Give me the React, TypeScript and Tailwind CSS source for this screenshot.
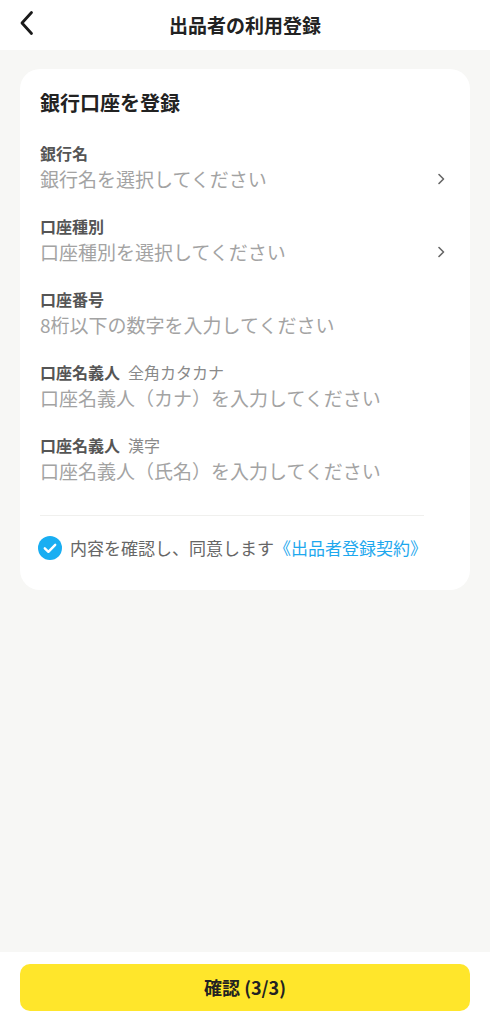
import React from "react";

const font = {
  fontFamily: '"Noto Sans CJK JP", "Noto Sans", sans-serif',
};

interface FieldRowProps {
  label: string;
  sub?: string;
  placeholder: string;
  select?: boolean;
}

function FieldRow({ label, sub, placeholder, select }: FieldRowProps) {
  return (
    <div className="flex items-center justify-between">
      <div className="flex flex-col">
        <div className="flex h-[24px] items-center gap-[8px]">
          <span className="text-[16px] font-bold leading-[24px] text-[#555555]">
            {label}
          </span>
          {sub && (
            <span className="text-[16px] leading-[24px] text-[#8a8a8a]">
              {sub}
            </span>
          )}
        </div>
        <span className="text-[19px] leading-[27px] text-[#a3a3a3]">
          {placeholder}
        </span>
      </div>
      {select && (
        <svg
          width="10"
          height="14"
          viewBox="0 0 10 14"
          className="mt-[24px] mr-[4px]"
        >
          <path
            d="M3 2.5 L7.5 7 L3 11.5"
            fill="none"
            stroke="#666"
            strokeWidth="1.6"
            strokeLinecap="round"
            strokeLinejoin="round"
          />
        </svg>
      )}
    </div>
  );
}

export default function App() {
  return (
    <div className="flex h-screen flex-col bg-[#f7f7f5]" style={font}>
      {/* header */}
      <header className="relative flex h-[50px] items-center justify-center bg-white">
        <svg
          width="18"
          height="26"
          viewBox="0 0 18 26"
          className="absolute left-[17px] top-[10px]"
        >
          <path
            d="M14.5 2.5 L5 13 L14.5 23.5"
            fill="none"
            stroke="#1a1a1a"
            strokeWidth="2.8"
            strokeLinecap="round"
            strokeLinejoin="round"
          />
        </svg>
        <h1 className="text-[19px] font-bold text-[#222222]">
          出品者の利用登録
        </h1>
      </header>

      {/* body */}
      <main className="flex-1 px-[20px] pt-[19px]">
        <div className="rounded-[20px] bg-white px-[20px] pt-[20px] pb-[30px]">
          <h2 className="text-[20px] font-bold leading-[28px] text-[#222222]">
            銀行口座を登録
          </h2>

          <div className="mt-[24px] flex flex-col gap-[22px]">
            <FieldRow
              label="銀行名"
              placeholder="銀行名を選択してください"
              select
            />
            <FieldRow
              label="口座種別"
              placeholder="口座種別を選択してください"
              select
            />
            <FieldRow
              label="口座番号"
              placeholder="8桁以下の数字を入力してください"
            />
            <FieldRow
              label="口座名義人"
              sub="全角カタカナ"
              placeholder="口座名義人（カナ）を入力してください"
            />
            <FieldRow
              label="口座名義人"
              sub="漢字"
              placeholder="口座名義人（氏名）を入力してください"
            />
          </div>

          <div className="mt-[31px] mr-[26px] h-px bg-[#f0f0ee]" />

          <div className="mt-[20px] flex items-center gap-[8px]">
            <svg width="24" height="24" viewBox="0 0 24 24" className="-ml-[2px]">
              <circle cx="12" cy="12" r="12" fill="#19aef2" />
              <path
                d="M6.8 12.3 L10.4 15.8 L17.2 8.8"
                fill="none"
                stroke="#fff"
                strokeWidth="2.4"
                strokeLinecap="round"
                strokeLinejoin="round"
              />
            </svg>
            <span className="text-[17px] leading-[24px] text-[#666666]">
              内容を確認し、同意します
              <span className="text-[#1ea8ee]">《出品者登録契約》</span>
            </span>
          </div>
        </div>
      </main>

      {/* footer */}
      <footer className="bg-white px-[20px] pt-[12px] pb-[13px]">
        <button className="flex h-[47px] w-full items-center justify-center rounded-[10px] bg-[#ffe62b] text-[18px] font-bold text-[#222222]">
          確認 (3/3)
        </button>
      </footer>
    </div>
  );
}
